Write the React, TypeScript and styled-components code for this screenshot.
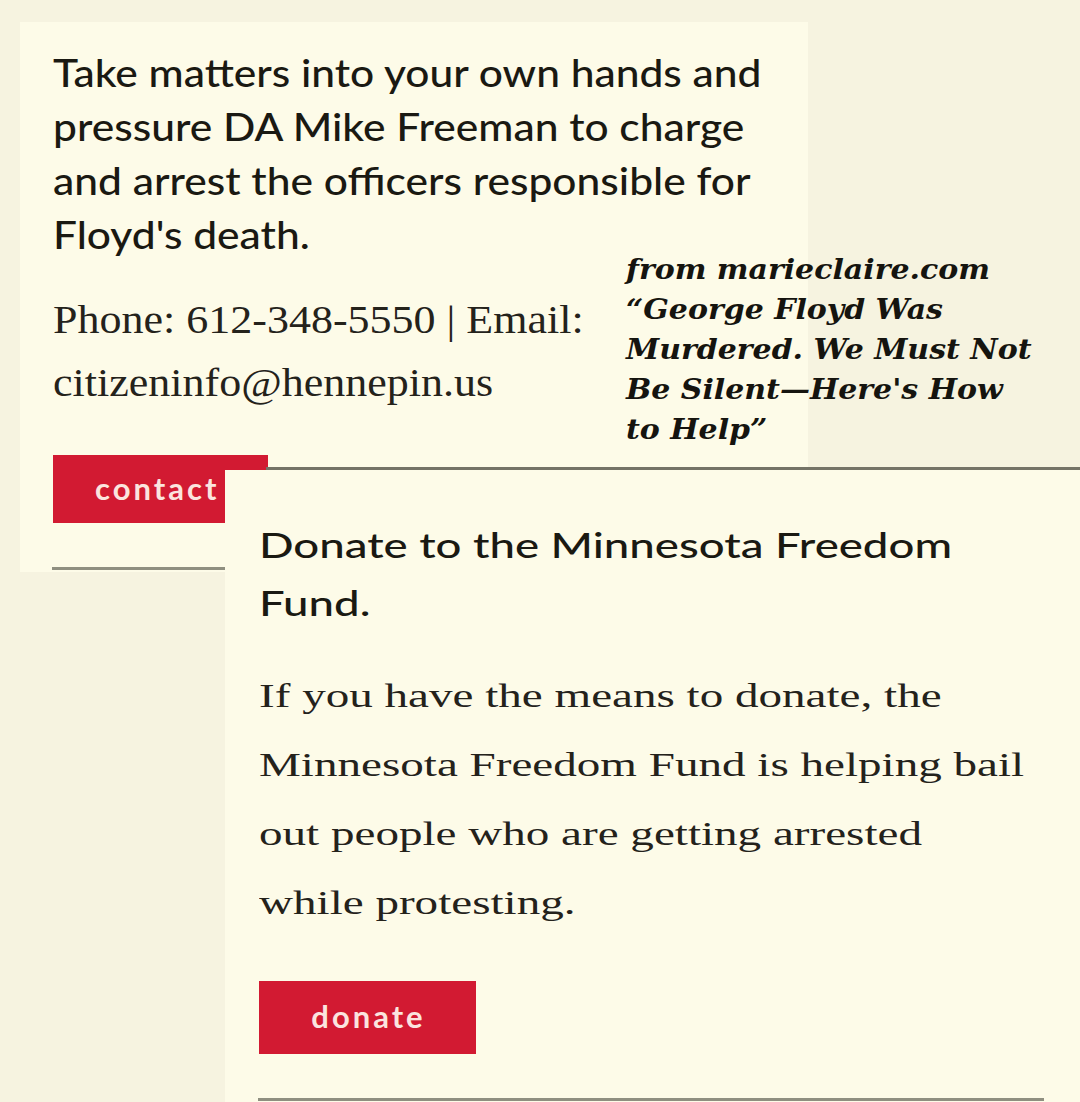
import React from "react";
import styled, { createGlobalStyle } from "styled-components";

const Global = createGlobalStyle`
  html, body { margin: 0; padding: 0; background: #f6f3e0; }
  #root { width: 1080px; height: 1102px; }
`;

const Canvas = styled.div`
  position: relative;
  width: 1080px;
  height: 1102px;
  overflow: hidden;
  background: #f6f3e0;
  color: #1b1a14;
`;

const Clip = styled.section<{ $left: number; $top: number; $w: number; $h: number; $z: number }>`
  position: absolute;
  left: ${(p) => p.$left}px;
  top: ${(p) => p.$top}px;
  width: ${(p) => p.$w}px;
  height: ${(p) => p.$h}px;
  z-index: ${(p) => p.$z};
  background: #fdfbe8;
  box-sizing: border-box;
  display: flex;
  flex-direction: column;
  align-items: flex-start;
`;

const FirstClip = styled(Clip)`
  padding: 23px 0 0 33px;
`;

const SecondClip = styled(Clip)`
  padding: 46px 0 0 34px;
`;

const Stretched = styled.div<{ $stretch: number }>`
  margin: 0;
  transform: scaleX(${(p) => p.$stretch});
  transform-origin: left top;
  white-space: nowrap;
  flex-shrink: 0;
`;

const SansText = styled(Stretched)<{ $size: number; $lh: number }>`
  font-family: Lato, "Open Sans", sans-serif;
  font-size: ${(p) => p.$size}px;
  line-height: ${(p) => p.$lh}px;
  font-weight: 500;
  color: #1a1912;
`;

const SerifText = styled(Stretched)<{ $size: number; $lh: number; $gap: number }>`
  margin: ${(p) => p.$gap}px 0 0;
  font-family: "Liberation Serif", serif;
  font-size: ${(p) => p.$size}px;
  line-height: ${(p) => p.$lh}px;
  color: #24221b;
`;

const RedButton = styled.a<{ $w: number; $h: number; $gap: number }>`
  margin-top: ${(p) => p.$gap}px;
  width: ${(p) => p.$w}px;
  height: ${(p) => p.$h}px;
  background: #d21a32;
  color: #fbe4df;
  font-family: Lato, sans-serif;
  font-weight: 700;
  font-size: 31px;
  letter-spacing: 3px;
  display: flex;
  align-items: center;
  box-sizing: border-box;
  text-decoration: none;
  flex-shrink: 0;
`;

const ContactButton = styled(RedButton)`
  padding: 0 0 3px 42px;
`;

const DonateButton = styled(RedButton)`
  justify-content: center;
  padding: 0 0 4px 2px;
`;

const Rule = styled.hr<{ $w: number; $gap: number }>`
  margin: ${(p) => p.$gap}px 0 0 -1px;
  width: ${(p) => p.$w}px;
  height: 3px;
  border: 0;
  background: #8f8f80;
  flex-shrink: 0;
`;

const TopRule = styled.div`
  position: absolute;
  left: 266px;
  top: 467px;
  width: 814px;
  height: 3px;
  background: #747366;
  z-index: 1;
`;

const Credit = styled.p`
  position: absolute;
  left: 626px;
  top: 250px;
  margin: 0;
  z-index: 3;
  font-family: "DejaVu Serif", serif;
  font-style: italic;
  font-weight: 700;
  font-size: 27px;
  line-height: 40px;
  color: #15140f;
  white-space: nowrap;
  transform: scaleX(1.11);
  transform-origin: left top;
`;

export default function App() {
  return (
    <>
      <Global />
      <Canvas>
        <FirstClip $left={20} $top={22} $w={788} $h={550} $z={1}>
          <SansText as="p" $stretch={1.09} $size={39} $lh={54}>
            Take matters into your own hands and
            <br />
            pressure DA Mike Freeman to charge
            <br />
            and arrest the officers responsible for
            <br />
            Floyd's death.
          </SansText>
          <SerifText as="p" $stretch={1.1} $size={40} $lh={63} $gap={27}>
            Phone: 612-348-5550 | Email:
            <br />
            citizeninfo@hennepin.us
          </SerifText>
          <ContactButton $w={215} $h={68} $gap={41} href="#">
            contact
          </ContactButton>
          <Rule $w={720} $gap={44} />
        </FirstClip>
        <Credit>
          from marieclaire.com
          <br />
          “George Floyd Was
          <br />
          Murdered. We Must Not
          <br />
          Be Silent—Here's How
          <br />
          to Help”
        </Credit>
        <TopRule />
        <SecondClip $left={225} $top={470} $w={855} $h={632} $z={2}>
          <SansText as="h2" $stretch={1.34} $size={34} $lh={58}>
            Donate to the Minnesota Freedom
            <br />
            Fund.
          </SansText>
          <SerifText as="p" $stretch={1.385} $size={34} $lh={69} $gap={29}>
            If you have the means to donate, the
            <br />
            Minnesota Freedom Fund is helping bail
            <br />
            out people who are getting arrested
            <br />
            while protesting.
          </SerifText>
          <DonateButton $w={217} $h={73} $gap={44} href="#">
            donate
          </DonateButton>
          <Rule $w={786} $gap={44} />
        </SecondClip>
      </Canvas>
    </>
  );
}
